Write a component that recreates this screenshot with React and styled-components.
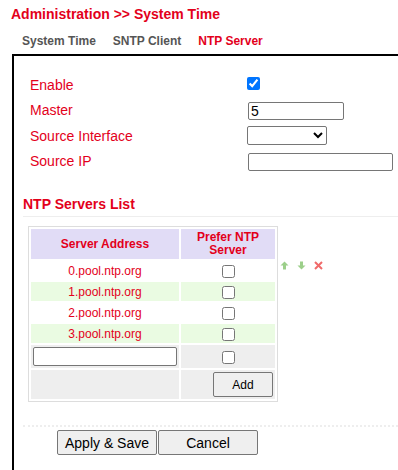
import styled, { createGlobalStyle } from 'styled-components'

const Global = createGlobalStyle`
    body {
        margin: 0;
        font-family: "Liberation Sans", Arial, sans-serif;
        background: #fff;
    }
`;

const RED = "#e3001b";

const Page = styled.div`
    padding-top: 5px;
    width: 398px;
    height: 470px;
    overflow: hidden;
`;
const Title = styled.h1`
    margin: 0 0 0 11px;
    font-size: 14px;
    line-height: 18px;
    font-weight: bold;
    color: ${RED};
`;
const Tabs = styled.div`
    display: flex;
    gap: 17px;
    padding-left: 22px;
    margin-top: 8px;
    height: 20px;
    align-items: center;
`;
const Tab = styled.span`
    font-size: 12px;
    font-weight: bold;
    color: ${props => props.active ? RED : "#555"};
`;
const Box = styled.div`
    margin: 3px 0 0 12px;
    border-top: 2px solid #000;
    border-left: 2px solid #000;
    padding: 16px 0 20px 9px;
    height: 430px;
`;
const Form = styled.div`
    display: grid;
    grid-template-columns: 217px 1fr;
    grid-auto-rows: 25.5px;
    align-items: center;
    padding-left: 7px;
`;
const Label = styled.span`
    font-size: 14px;
    color: ${RED};
`;
const Check = styled.input.attrs({ type: "checkbox" })`
    margin: 0;
    width: 13px;
    height: 13px;
    accent-color: #0075ff;
`;
const TextInput = styled.input`
    box-sizing: border-box;
    margin: 0 0 0 ${props => props.offset || 0}px;
    width: ${props => props.w}px;
    height: ${props => props.h || 18}px;
    border: 1px solid #767676;
    border-radius: 2px;
    padding: 0 2px;
    font-family: "Liberation Sans", Arial, sans-serif;
    font-size: 14px;
    color: #000;
    vertical-align: middle;
`;
const Select = styled.select`
    box-sizing: border-box;
    margin: 0;
    width: 80px;
    height: 19px;
    border: 1px solid #767676;
    border-radius: 2px;
    background: #fff;
`;
const SectionTitle = styled.h2`
    margin: 21px 0 0 0;
    font-size: 14px;
    line-height: 18px;
    font-weight: bold;
    color: ${RED};
    padding-bottom: 3px;
    border-bottom: 1px solid #eee;
`;
const ListRow = styled.div`
    display: flex;
    align-items: flex-start;
    margin: 9px 0 0 5px;
`;
const Table = styled.table`
    border: 1px solid #ddd;
    border-spacing: 2px;
    width: 250px;
    font-size: 12px;
`;
const Th = styled.th`
    background: #e1dcf6;
    color: ${RED};
    font-size: 12px;
    font-weight: bold;
    height: 30px;
    padding: 0 2px;
    line-height: 13px;
    width: ${props => props.w}px;
`;
const Td = styled.td`
    background: ${props => props.bg || "#fff"};
    color: ${RED};
    text-align: ${props => props.align || "center"};
    height: ${props => props.h || 19}px;
    padding: 0 2px;
    vertical-align: middle;
`;
const BoxCheck = styled.input.attrs({ type: "checkbox" })`
    margin: 0;
    width: 13px;
    height: 13px;
    vertical-align: middle;
`;
const Icons = styled.div`
    display: flex;
    gap: 8px;
    margin: 35px 0 0 2px;
`;
const Btn = styled.button`
    box-sizing: border-box;
    width: ${props => props.w}px;
    height: ${props => props.h}px;
    background: #efefef;
    border: 1px solid #767676;
    border-radius: 2px;
    font-family: "Liberation Sans", Arial, sans-serif;
    font-size: ${props => props.fs || 14}px;
    color: #000;
    padding: 0;
    margin: 0;
`;
const Dotted = styled.div`
    margin-top: 23px;
    border-top: 2px dotted #eee;
`;
const Actions = styled.div`
    display: flex;
    gap: 1px;
    margin: 3px 0 0 34px;
`;

const Up = ({ down }) => (
    <svg width="9" height="9" viewBox="0 0 9 9" style={{ transform: down ? "rotate(180deg)" : "none" }}>
        <path d="M4.5 0.5 L8.5 4.5 L6 4.5 L6 8.5 L3 8.5 L3 4.5 L0.5 4.5 Z" fill="#9ccf8a" />
    </svg>
);
const Del = () => (
    <svg width="9" height="9" viewBox="0 0 9 9">
        <path d="M1 1 L8 8 M8 1 L1 8" stroke="#f06a6a" strokeWidth="2" />
    </svg>
);

const servers = ["0.pool.ntp.org", "1.pool.ntp.org", "2.pool.ntp.org", "3.pool.ntp.org"];

const App = () => {
  return (
    <Page>
        <Global/>
        <Title>Administration &gt;&gt; System Time</Title>
        <Tabs>
            <Tab>System Time</Tab>
            <Tab>SNTP Client</Tab>
            <Tab active>NTP Server</Tab>
        </Tabs>
        <Box>
            <Form>
                <Label>Enable</Label>
                <div><Check defaultChecked /></div>
                <Label>Master</Label>
                <div><TextInput w={96} offset={1} defaultValue="5" /></div>
                <Label>Source Interface</Label>
                <div><Select><option></option></Select></div>
                <Label>Source IP</Label>
                <div><TextInput w={145} offset={1} /></div>
            </Form>
            <SectionTitle>NTP Servers List</SectionTitle>
            <ListRow>
                <Table>
                    <thead>
                        <tr>
                            <Th w={143}>Server Address</Th>
                            <Th>Prefer NTP<br/>Server</Th>
                        </tr>
                    </thead>
                    <tbody>
                        {servers.map((s, i) => (
                            <tr key={s}>
                                <Td bg={i % 2 ? "#eafbe2" : "#fff"}>{s}</Td>
                                <Td bg={i % 2 ? "#eafbe2" : "#fff"}><BoxCheck /></Td>
                            </tr>
                        ))}
                        <tr>
                            <Td bg="#eee" h={23}><TextInput w={144} h={19} /></Td>
                            <Td bg="#eee" h={23}><BoxCheck /></Td>
                        </tr>
                        <tr>
                            <Td bg="#eee" h={29}></Td>
                            <Td bg="#eee" h={29} align="right"><Btn w={60} h={25} fs={12}>Add</Btn></Td>
                        </tr>
                    </tbody>
                </Table>
                <Icons>
                    <Up />
                    <Up down />
                    <Del />
                </Icons>
            </ListRow>
            <Dotted/>
            <Actions>
                <Btn w={100} h={25}>Apply &amp; Save</Btn>
                <Btn w={100} h={25}>Cancel</Btn>
            </Actions>
        </Box>
    </Page>
  )
}

export default App
